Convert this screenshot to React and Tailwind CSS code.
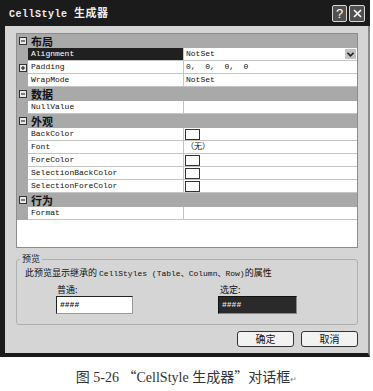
import React from 'react';

const mono = { fontFamily: '"Liberation Mono", "Noto Sans CJK SC", monospace' };
const cjk = { fontFamily: '"Noto Sans CJK SC", sans-serif' };

const rows = [
    { type: 'h', label: '布局' },
    { label: 'Alignment', value: 'NotSet', selected: true, dropdown: true },
    { label: 'Padding', value: '0,  0,  0,  0', plus: true },
    { label: 'WrapMode', value: 'NotSet' },
    { type: 'h', label: '数据' },
    { label: 'NullValue', value: '' },
    { type: 'h', label: '外观' },
    { label: 'BackColor', swatch: true },
    { label: 'Font', value: '（无）' },
    { label: 'ForeColor', swatch: true },
    { label: 'SelectionBackColor', swatch: true },
    { label: 'SelectionForeColor', swatch: true },
    { type: 'h', label: '行为' },
    { label: 'Format', value: '' },
];

const BoxIcon = ({ plus }) => (
    <svg width="8" height="8" viewBox="0 0 8 8" className="shrink-0">
        <rect x="0.5" y="0.5" width="7" height="7" fill="#e8e8e8" stroke="#333" />
        <line x1="2" y1="4" x2="6" y2="4" stroke="#111" />
        {plus && <line x1="4" y1="2" x2="4" y2="6" stroke="#111" />}
    </svg>
);

const GridRow = ({ row }) => {
    if (row.type === 'h') {
        return (
            <div className="h-[14px] flex items-center bg-[#a9a9a9] pl-[2px] gap-[4px]">
                <BoxIcon />
                <span className="text-[11px] font-bold leading-none text-[#111]" style={cjk}>{row.label}</span>
            </div>
        );
    }
    return (
        <div className="h-[13px] flex">
            <div className="w-[11px] bg-[#a9a9a9] flex items-center justify-center">
                {row.plus && <BoxIcon plus />}
            </div>
            <div className={`w-[155px] border-b border-[#c4c4c4] flex items-center pl-[3px] text-[8px] leading-none ${row.selected ? 'bg-[#202020] text-white' : 'bg-white text-[#111]'}`} style={mono}>
                {row.label}
            </div>
            <div className="flex-1 bg-white border-b border-l border-[#c4c4c4] flex items-center pl-[1px] text-[8px] leading-none text-[#111] relative whitespace-pre" style={mono}>
                {row.swatch && <div className="w-[15px] h-[11px] border border-[#333] bg-white" />}
                {row.value && <span className="pl-[1px]">{row.value}</span>}
                {row.dropdown && (
                    <div className="absolute right-[1px] top-[1px] w-[11px] h-[10px] bg-[#c2c2c2] flex items-center justify-center">
                        <svg width="7" height="5" viewBox="0 0 7 5">
                            <path d="M0.5 0.8 L3.5 3.8 L6.5 0.8" fill="none" stroke="#222" strokeWidth="1.6" />
                        </svg>
                    </div>
                )}
            </div>
        </div>
    );
};

const App = () => {
    return (
        <div className="w-[373px] h-[391px] bg-white">
            <div className="w-[370px] h-[357px] flex flex-col border-l-[5px] border-b-[4px] border-r-2 border-[#1a1a1a] border-r-[#8a8a8a]">
                {/* Title bar */}
                <div className="h-[26px] bg-[#1b1b1b] flex items-center justify-between pl-[5px] pr-[1px] -ml-[5px] -mr-[2px]">
                    <span className="text-[10px] font-bold text-[#eee] tracking-[0.5px] pl-[4px]" style={mono}>
                        CellStyle <span className="text-[11px]" style={cjk}>生成器</span>
                    </span>
                    <div className="flex gap-[2px] pr-[4px]">
                        <div className="w-[15px] h-[17px] bg-[#505050] border border-[#d8d8d8] rounded-[2px] flex items-center justify-center text-white text-[13px] leading-none" style={{ fontFamily: '"Liberation Sans", sans-serif' }}>?</div>
                        <div className="w-[16px] h-[17px] bg-[#505050] border border-[#d8d8d8] rounded-[2px] flex items-center justify-center">
                            <svg width="9" height="9" viewBox="0 0 9 9">
                                <path d="M1 1 L8 8 M8 1 L1 8" stroke="#fff" strokeWidth="1.6" />
                            </svg>
                        </div>
                    </div>
                </div>

                {/* Body */}
                <div className="flex-1 bg-[#d5d5d5] pt-[7px] pl-[11px] pr-[10px] flex flex-col">
                    <div className="h-[215px] border border-[#8c8c8c] bg-white flex flex-col">
                        {rows.map((row, i) => <GridRow key={i} row={row} />)}
                    </div>

                    {/* Preview group */}
                    <div className="mt-[11px] h-[66px] border border-[#b0b0b0] rounded-[3px] relative px-[8px] pt-[8px]">
                        <span className="absolute -top-[6px] left-[3px] bg-[#d5d5d5] px-[2px] text-[9px] leading-none text-[#222]" style={cjk}>预览</span>
                        <div className="text-[9px] leading-none text-[#111] whitespace-nowrap" style={cjk}>
                            此预览显示继承的 <span className="text-[8px]" style={mono}>CellStyles (Table、Column、Row)</span>的属性
                        </div>
                        <div className="flex mt-[7px] pl-[31px] gap-[85px]">
                            <div className="flex flex-col">
                                <span className="text-[9px] leading-none text-[#111] pl-[1px]" style={cjk}>普通:</span>
                                <div className="mt-[2px] w-[77px] h-[18px] bg-white border border-[#222] border-r-[#999] border-b-[#999] flex items-center pl-[3px] text-[8px] font-bold text-[#222]" style={mono}>####</div>
                            </div>
                            <div className="flex flex-col">
                                <span className="text-[9px] leading-none text-[#111] pl-[2px]" style={cjk}>选定:</span>
                                <div className="mt-[2px] w-[79px] h-[18px] bg-[#2a2a2a] border border-[#111] border-r-[#888] border-b-[#888] flex items-center pl-[3px] text-[8px] font-bold text-[#ddd]" style={mono}>####</div>
                            </div>
                        </div>
                    </div>

                    {/* Buttons */}
                    <div className="flex justify-end gap-[7px] mt-[6px]">
                        {['确定', '取消'].map(t => (
                            <button key={t} className="w-[57px] h-[16px] bg-[#f2f2f2] border border-[#333] rounded-[3px] text-[10px] leading-none text-[#111]" style={cjk}>{t}</button>
                        ))}
                    </div>
                </div>
            </div>

            {/* Caption */}
            <div className="mt-[12px] text-center text-[14px] leading-none text-[#333]" style={{ fontFamily: '"Liberation Serif", "Noto Sans CJK SC", serif' }}>
                图 5-26 <span style={cjk}>“</span>CellStyle 生成器<span style={cjk}>”</span>对话框<span className="text-[8px] text-[#888]">↵</span>
            </div>
        </div>
    );
};

export default App;
